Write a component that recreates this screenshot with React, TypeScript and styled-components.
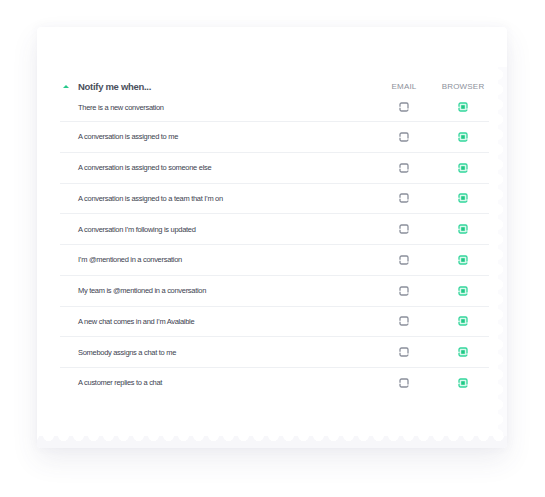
import styled, { createGlobalStyle } from "styled-components";

const GlobalStyle = createGlobalStyle`
	html, body {
		margin: 0;
		padding: 0;
		background: #ffffff;
	}
	body {
		font-family: "Liberation Sans", Arial, sans-serif;
		-webkit-font-smoothing: antialiased;
	}
`;

const Page = styled.div`
	width: 545px;
	height: 497px;
	padding: 27px 0 0 37px;
	box-sizing: border-box;
`;

const Card = styled.div`
	position: relative;
	width: 470px;
	height: 421px;
	background: #ffffff;
	border-radius: 4px;
	box-shadow: 0 12px 28px rgba(70, 70, 110, 0.09), 0 0 10px rgba(70, 70, 110, 0.05);
	padding: 52px 18px 0 23px;
	box-sizing: border-box;
	overflow: hidden;
`;

const ScallopsBottom = styled.div`
	position: absolute;
	left: 0;
	right: 0;
	bottom: 0;
	height: 12px;
	background-color: #f7f7fa;
	background-image: radial-gradient(circle at 50% 0, #ffffff 5px, transparent 5.5px);
	background-size: 15px 12px;
	background-position: 4px 0;
`;

const ScallopsRight = styled.div`
	position: absolute;
	top: 40px;
	right: 0;
	bottom: 12px;
	width: 9px;
	background-color: #fbfbfd;
	background-image: radial-gradient(circle at 0 50%, #ffffff 5px, transparent 5.5px);
	background-size: 9px 15px;
`;

const Grid = styled.div`
	display: grid;
	grid-template-columns: 18px 1fr 66px 52px;
	align-items: center;
`;

const HeaderRow = styled(Grid)`
	height: 14px;
`;

const Caret = styled.span`
	width: 0;
	height: 0;
	border-left: 3px solid transparent;
	border-right: 3px solid transparent;
	border-bottom: 3px solid #27c98b;
	margin-left: 3px;
`;

const Title = styled.div`
	font-size: 9.5px;
	font-weight: 700;
	letter-spacing: -0.3px;
	color: #4b505c;
`;

const ColLabel = styled.div`
	font-size: 8px;
	color: #8d919b;
	text-align: center;
	letter-spacing: 0.2px;
`;

const Row = styled(Grid)<{ $first?: boolean }>`
	height: ${(p) => (p.$first ? "28px" : "29.75px")};
	border-top: ${(p) => (p.$first ? "none" : "1px solid #eef0f3")};
`;

const Label = styled.div`
	grid-column: 2;
	font-size: 7.5px;
	letter-spacing: -0.3px;
	color: #3c4250;
`;

const Cell = styled.div`
	display: flex;
	justify-content: center;
	align-items: center;
`;

const EmailBox = () => (
	<svg width="10" height="10" viewBox="0 0 10 10">
		<rect x="1" y="1" width="8" height="8" rx="1.5" fill="none" stroke="#8a8f9b" strokeWidth="1.3" strokeDasharray="11 1" />
	</svg>
);

const BrowserBox = () => (
	<svg width="10" height="10" viewBox="0 0 10 10">
		<rect x="1" y="1" width="8" height="8" rx="1.5" fill="#d9f8ec" stroke="#33d69c" strokeWidth="1.3" strokeDasharray="11 1" />
		<rect x="3.2" y="3.2" width="3.6" height="3.6" fill="#1fc986" />
	</svg>
);

const items = [
	"There is a new conversation",
	"A conversation is assigned to me",
	"A conversation is assigned to someone else",
	"A conversation is assigned to a team that I\u2019m on",
	"A conversation I\u2019m following is updated",
	"I\u2019m @mentioned in a conversation",
	"My team is @mentioned in a conversation",
	"A new chat comes in and I\u2019m Avalaible",
	"Somebody assigns a chat to me",
	"A customer replies to a chat",
];

export default function App() {
	return (
		<>
			<GlobalStyle />
			<Page>
				<Card>
					<ScallopsRight />
					<ScallopsBottom />
					<HeaderRow>
						<Caret />
						<Title>Notify me when...</Title>
						<ColLabel>EMAIL</ColLabel>
						<ColLabel>BROWSER</ColLabel>
					</HeaderRow>
					{items.map((text, i) => (
						<Row key={text} $first={i === 0}>
							<Label>{text}</Label>
							<Cell>
								<EmailBox />
							</Cell>
							<Cell>
								<BrowserBox />
							</Cell>
						</Row>
					))}
				</Card>
			</Page>
		</>
	);
}
